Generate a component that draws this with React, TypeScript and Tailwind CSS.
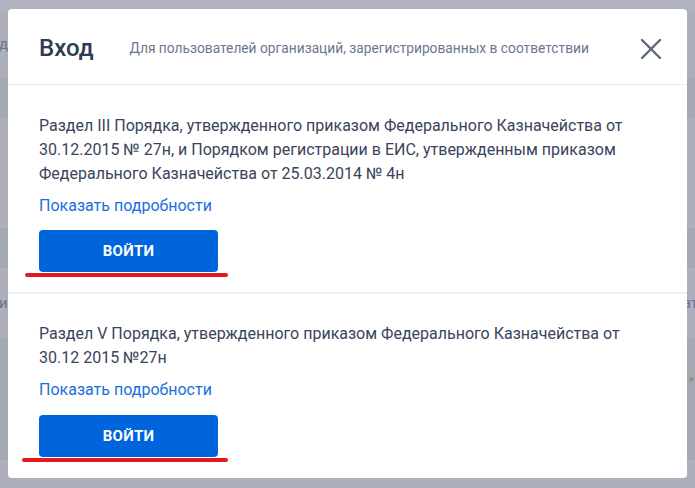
import { useState } from 'react'

const sections = [
  {
    text: 'Раздел III Порядка, утвержденного приказом Федерального Казначейства от 30.12.2015 № 27н, и Порядком регистрации в ЕИС, утвержденным приказом Федерального Казначейства от 25.03.2014 № 4н',
    pt: 'pt-[29px]',
    btn: 'mt-[12px]',
    line: 'left-[-14px] w-[203px] top-[43px]',
  },
  {
    text: 'Раздел V Порядка, утвержденного приказом Федерального Казначейства от 30.12 2015 №27н',
    pt: 'pt-[28px]',
    btn: 'mt-[13px]',
    line: 'left-[-17px] w-[206px] top-[43px]',
  },
]

function CloseIcon() {
  return (
    <svg width="22" height="22" viewBox="0 0 22 22" fill="none">
      <path d="M2 2 L20 20 M20 2 L2 20" stroke="#5b677c" strokeWidth="2.4" strokeLinecap="round" />
    </svg>
  )
}

export default function App() {
  const [open] = useState(true)

  return (
    <div className="relative h-[488px] w-[695px] overflow-hidden bg-[#adb0bc] font-['Roboto',sans-serif]">
      {/* dimmed page behind the dialog */}
      <div className="flex flex-col text-[15px] text-[#6c7488]">
        <div className="h-[10px] bg-[#b0b3bf]" />
        <div className="flex h-[68px] items-center justify-between bg-[#adb0bc]">
          <span className="-ml-[1px]">до</span>
        </div>
        <div className="h-[40px] bg-[#a4a8b4]" />
        <div className="h-[110px] bg-[#adb0bc]" />
        <div className="h-[40px] bg-[#a4a8b4]" />
        <div className="flex h-[70px] items-center justify-between bg-[#adb0bc]">
          <span className="-ml-[1px]">им</span>
          <span className="-mr-[3px]">ат</span>
        </div>
        <div className="flex h-[122px] justify-end bg-[#a4a8b4] pt-[30px]">
          <span className="mr-[1px] text-[#a4896f]">▪</span>
        </div>
        <div className="h-[28px] bg-[#adb0bc]" />
      </div>

      {open && (
        <div className="absolute left-[8px] top-[9px] flex h-[469px] w-[679px] flex-col rounded-[4px] bg-white">
          <div className="flex h-[76px] shrink-0 items-center border-b border-[#ececec] pl-[31px] pr-[25px]">
            <span className="pt-[3px] text-[24px] font-medium text-[#2f3b52]">Вход</span>
            <span className="ml-[36px] pt-[4px] text-[13.75px] text-[#6b7790]">
              Для пользователей организаций, зарегистрированных в соответствии
            </span>
            <button className="ml-auto pt-[4px]" aria-label="Закрыть">
              <CloseIcon />
            </button>
          </div>

          {sections.map((s, i) => (
            <div
              key={i}
              className={`${s.pt} pl-[31px] pr-[30px] ${i === 0 ? 'h-[209px] border-b-2 border-[#efefef]' : 'flex-1'}`}
            >
              <p className="text-[16px] leading-[24px] text-[#39445c]">{s.text}</p>
              <a className="mt-[8px] block text-[16px] leading-[24px] text-[#1a6fdc]">Показать подробности</a>
              <div className={`relative w-[179px] ${s.btn}`}>
                <button className="flex h-[42px] w-[179px] items-center justify-center rounded-[4px] bg-[#0065dc] text-[15px] font-bold tracking-[0.3px] text-white">
                  ВОЙТИ
                </button>
                <div className={`absolute h-[4px] rounded-full bg-[#e4191f] ${s.line}`} />
              </div>
            </div>
          ))}
        </div>
      )}
    </div>
  )
}
